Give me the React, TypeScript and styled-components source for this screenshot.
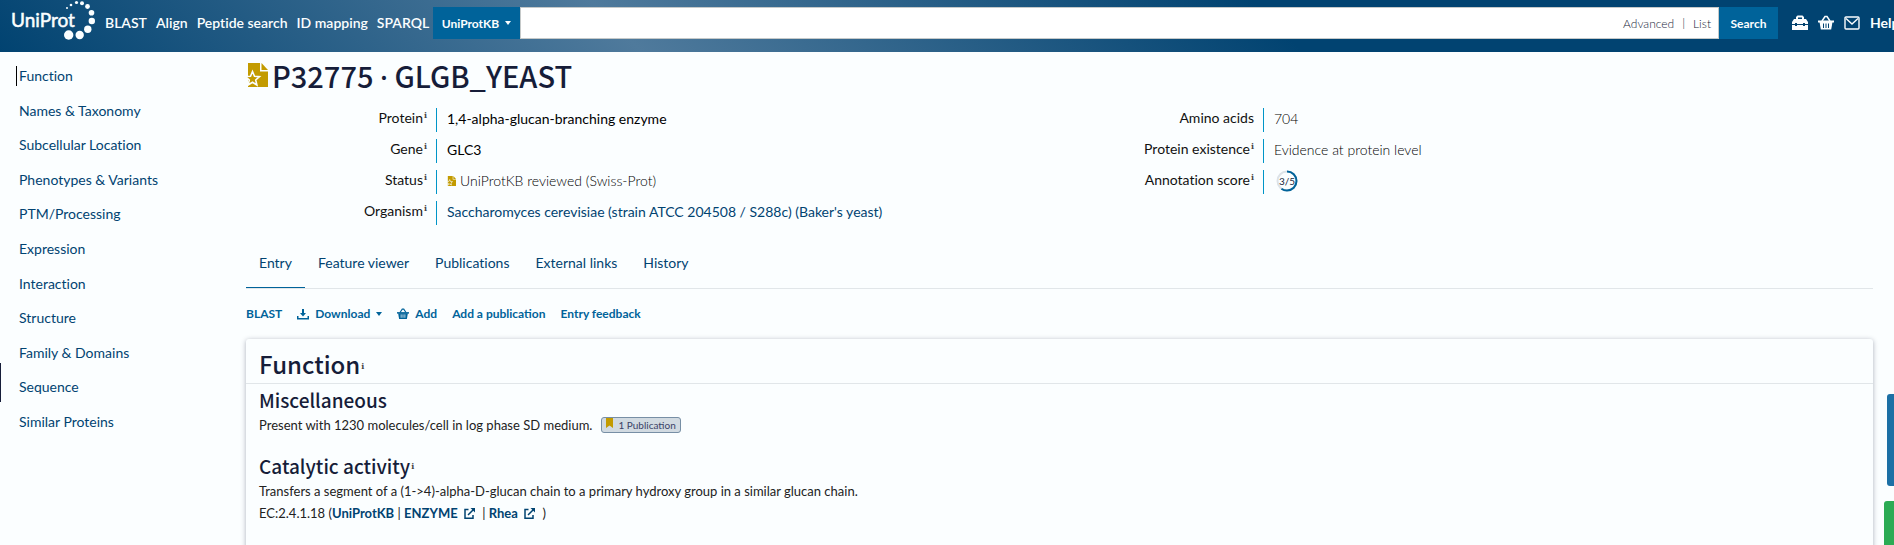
import React from 'react';
import styled, { createGlobalStyle } from 'styled-components';

const LATO = "Lato, 'Liberation Sans', sans-serif";
const HEADING = "'Noto Sans CJK SC', 'Noto Sans', sans-serif";
const SEA = '#014371';
const ACTION = '#00639a';

const GlobalStyle = createGlobalStyle`
  * { box-sizing: border-box; }
  html { background: #fbfeff; }
  body { margin: 0; font: 400 14px/20px ${LATO}; font-variant-ligatures: none; color: #111; overflow: hidden; }
  a { color: ${SEA}; text-decoration: none; }
  button { font-family: ${LATO}; cursor: pointer; border: 0; background: none; padding: 0; }
  h1, h2, h3, p, dl, dd, ul { margin: 0; padding: 0; }
  svg { display: block; flex: none; }
`;

const Page = styled.div`
  position: relative;
  min-height: 100vh;
`;

const Header = styled.header`
  height: 52px;
  display: flex;
  align-items: center;
  padding-bottom: 6px;
  overflow: hidden;
  background: linear-gradient(45deg, #014371 0%, #4f7a9c 33%, #014371 67%, #014371 100%);
`;

const LogoLink = styled.a`
  flex: none;
  margin-left: 11px;
  width: 94px;
  height: 46px;
`;

const TopNav = styled.nav`
  display: flex;
  flex: none;
  gap: 9px;
  width: 328px;
  a { color: #fbfeff; white-space: nowrap; font-weight: 600; }
`;

const SearchForm = styled.form`
  flex: 1;
  min-width: 0;
  display: flex;
  height: 32px;
`;

const SearchButton = styled.button`
  flex: none;
  width: ${(p: { $w: number }) => p.$w}px;
  display: flex;
  align-items: center;
  justify-content: center;
  gap: 6px;
  background: ${ACTION};
  color: #fbfeff;
  font-size: 12px;
  font-weight: 700;
`;

const SearchField = styled.div`
  flex: 1;
  min-width: 0;
  display: flex;
  align-items: center;
  gap: 8px;
  padding-right: 7px;
  background: #fff;
  border: 1px solid #c5c9c9;
  font-size: 12px;
  font-weight: 300;
  color: #161d39;
  input { flex: 1; min-width: 0; border: 0; outline: 0; height: 28px; background: none; }
  button { color: inherit; font-size: 12px; font-weight: 300; }
`;

const Tools = styled.div`
  flex: none;
  width: 116px;
  display: flex;
  align-items: center;
  gap: 10px;
  padding-left: 14px;
  color: #fbfeff;
  a { color: #fbfeff; font-weight: 700; }
`;

const Columns = styled.div`
  display: flex;
`;

const Sidebar = styled.ul`
  flex: none;
  width: 246px;
  height: 366px;
  margin-top: 14px;
  padding-left: 16px;
  list-style: none;
  display: flex;
  flex-direction: column;
  justify-content: space-between;
`;

const SideItem = styled.li<{ $active?: boolean }>`
  border-left: 1px solid ${(p) => (p.$active ? '#000' : 'transparent')};
  padding-left: 2px;
`;

const Main = styled.main`
  flex: 1;
  min-width: 0;
  padding: 0 21px 0 0;
`;

const Title = styled.h1`
  display: flex;
  align-items: center;
  gap: 4px;
  padding-top: 4px;
  font: 500 29px/38px ${HEADING};
  color: #161d39;
`;

const TitleText = styled.span`
  white-space: pre;
`;

const Dot = styled.span`
  font-family: 'Noto Sans', sans-serif;
  line-height: 20px;
`;

const Meta = styled.div`
  display: grid;
  grid-template-columns: 1fr 1fr;
  column-gap: 27px;
  margin-top: 14px;
`;

const MetaList = styled.dl`
  display: flex;
  flex-direction: column;
  gap: 7px;
`;

const MetaRow = styled.div`
  display: flex;
  height: 24px;
  dt { width: 190px; padding-right: 9px; text-align: right; line-height: 20px; }
  dd { display: flex; align-items: center; gap: 4px; border-left: 1px solid #0095c8; padding: 0 0 2px 10px; font-weight: 300; color: #000; }
  dd a { font-weight: 400; }
`;

const Strong = styled.span`
  font-weight: 400;
`;

const Info = styled.sup`
  font: 700 8px/8px 'DejaVu Serif', serif;
  vertical-align: 5px;
  margin-left: 1px;
  color: #444;
`;

const Tabs = styled.nav`
  display: flex;
  margin-top: 14px;
  border-bottom: 1px solid #e1e6e9;
`;

const Tab = styled.a<{ $active?: boolean }>`
  padding: 14px 13px;
  border-bottom: 1px solid ${(p) => (p.$active ? ACTION : 'transparent')};
`;

const Toolbar = styled.div`
  display: flex;
  align-items: center;
  gap: 15px;
  margin-top: 15px;
  height: 20px;
`;

const ToolButton = styled.button`
  display: flex;
  align-items: center;
  gap: 6px;
  color: ${ACTION};
  font-size: 12px;
  line-height: 20px;
  font-weight: 700;
`;

const Card = styled.section`
  margin-top: 15px;
  min-height: 240px;
  border-radius: 3px;
  background: #fbfeff;
  box-shadow: 0 1px 5px rgba(22, 29, 57, 0.35);
`;

const CardHead = styled.h2`
  padding: 9px 13px 3px;
  border-bottom: 1px solid #e1e6e9;
  font: 500 24px/32px ${HEADING};
  color: #161d39;
`;

const CardBody = styled.div`
  padding: 2px 13px;
`;

const SubHead = styled.h3`
  font: 500 19px/28px ${HEADING};
  color: #161d39;
`;

const Line = styled.p`
  display: flex;
  align-items: center;
  font-size: 13px;
  line-height: 22px;
  white-space: pre;
  color: #222;
  a { font-weight: 700; }
`;

const Block = styled.div`
  margin-bottom: 16px;
`;

const PubBadge = styled.button`
  display: flex;
  align-items: center;
  gap: 5px;
  height: 16px;
  margin-left: 9px;
  padding: 0 4px;
  border: 1px solid #778fa5;
  border-radius: 3px;
  background: #d1dae1;
  color: #3a4267;
  font-size: 10px;
  line-height: 14px;
`;

const ScrollMark = styled.div`
  position: absolute;
  left: 0;
  top: 363px;
  width: 1px;
  height: 39px;
  background: #161d39;
`;

const SideTab = styled.button<{ $top: number; $w: number; $color: string }>`
  position: absolute;
  right: 0;
  top: ${(p) => p.$top}px;
  width: ${(p) => p.$w}px;
  height: 92px;
  border-radius: 3px 0 0 3px;
  background: ${(p) => p.$color};
`;

const Clip = styled.div`
  position: absolute;
  inset: 0;
  overflow: hidden;
  pointer-events: none;
`;

const Logo = () => (
  <svg width="93" height="46" viewBox="0 0 93 46" fill="#fbfeff">
    <text x="0" y="27" stroke="#fbfeff" strokeWidth="0.5" fontFamily="Lato, sans-serif" fontWeight="400" fontSize="19">UniProt</text>
    <circle cx="56" cy="8" r="1" />
    <circle cx="60" cy="5" r="1.3" />
    <circle cx="65.500" cy="2.500" r="1.600" />
    <circle cx="71" cy="3.200" r="2" />
    <circle cx="76.500" cy="6.500" r="2.400" />
    <circle cx="80.500" cy="12.800" r="2.800" />
    <circle cx="80.800" cy="21" r="3.200" />
    <circle cx="76.800" cy="29.300" r="3.700" />
    <circle cx="68.700" cy="35" r="4.200" />
    <circle cx="57.700" cy="35" r="4.700" />
  </svg>
);

const Caret = () => (
  <svg width="6" height="4" viewBox="0 0 6 4"><path d="M0 0h6L3 4z" fill="currentColor" /></svg>
);

const Reviewed = ({ w, h }: { w: number; h: number }) => (
  <svg width={w} height={h} viewBox="0 0 22 24">
    <path d="M2 0h12v8.500h8V24H2z" fill="#c39b00" />
    <path d="M15.500 0l6.500 7h-6.500z" fill="#c39b00" />
    <path d="M6.500 8.500l2 4.700 5 .4-3.800 3.400 1.200 5-4.400-2.700-4.400 2.700 1.200-5L-.5 13.600l5-.4z" fill="#c39b00" stroke="#fbfeff" strokeWidth="1.600" />
  </svg>
);

const Basket = ({ size }: { size: number }) => (
  <svg width={size} height={size} viewBox="0 0 16 16" fill="none" stroke="currentColor">
    <path d="M4 6l3-4.500h2L12 6" strokeWidth="1.500" />
    <path d="M0 5.500h16v2H0z" fill="currentColor" stroke="none" />
    <path d="M1.500 7h13l-1.300 7.500H2.800z" fill="currentColor" stroke="none" />
    <path d="M5.500 8.500v4.500M8 8.500v4.500M10.500 8.500v4.500" stroke={size > 13 ? SEA : '#fbfeff'} />
  </svg>
);

const Toolbox = () => (
  <svg width="16" height="16" viewBox="0 0 16 16" fill="currentColor">
    <path fillRule="evenodd" d="M4 4V2L5.500 .5h5L12 2v2h2l2 3v2h-3V8h-2v1H5V8H3v1H0V7l2-3zm2 0h4V2.500H6z" />
    <path d="M0 10h3v1h2v-1h6v1h2v-1h3v5H0z" />
  </svg>
);

const Mail = () => (
  <svg width="16" height="16" viewBox="0 0 16 16" fill="none" stroke="currentColor" strokeWidth="1.400">
    <rect x="1" y="2" width="14" height="12" rx="1" /><path d="M2 3.500L8 9l6-5.500" />
  </svg>
);

const DownloadIcon = () => (
  <svg width="12" height="12" viewBox="0 0 12 12" fill="currentColor">
    <path d="M5 1h2v4h2L6 8.500 3 5h2z" /><path d="M0 8h1.500v2h9V8H12v3.500H0z" />
  </svg>
);

const External = () => (
  <svg width="11" height="11" viewBox="0 0 11 11" fill="none" stroke={SEA} strokeWidth="1.500">
    <path d="M4.500 1.500H1v8.700h8V7M4 7l5.500-5.500" /><path d="M6.500 0H11v4.500z" fill={SEA} stroke="none" />
  </svg>
);

const Score = () => (
  <svg width="26" height="22" viewBox="-2 0 26 22" fill="none" strokeWidth="2">
    <circle cx="11" cy="11" r="9.500" stroke="#dde3e8" />
    <circle cx="11" cy="11" r="9.500" stroke={ACTION} pathLength="5" strokeDasharray="3 2" transform="rotate(-90 11 11)" />
    <text x="11" y="15" textAnchor="middle" fill="#161d39" fontFamily="Lato, sans-serif" fontWeight="400" fontSize="10">3/5</text>
  </svg>
);

const Bookmark = () => (
  <svg width="7" height="14" viewBox="0 0 7 14"><path d="M0 0h7v10L3.500 7.500 0 10z" fill="#c39b00" /></svg>
);

const ExtLink = styled.a`
  display: flex;
  align-items: center;
  gap: 3px;
  margin-right: 4px;
`;

const sections = [
  'Function', 'Names & Taxonomy', 'Subcellular Location', 'Phenotypes & Variants', 'PTM/Processing',
  'Expression', 'Interaction', 'Structure', 'Family & Domains', 'Sequence', 'Similar Proteins',
];

export default function App() {
  return (
    <Page>
      <GlobalStyle />
      <Header>
        <LogoLink href="#" aria-label="UniProt home"><Logo /></LogoLink>
        <TopNav>
          {['BLAST', 'Align', 'Peptide search', 'ID mapping', 'SPARQL'].map((t) => <a key={t} href="#">{t}</a>)}
        </TopNav>
        <SearchForm>
          <SearchButton type="button" $w={87}>UniProtKB <Caret /></SearchButton>
          <SearchField>
            <input type="text" aria-label="Search UniProtKB" />
            <button type="button">Advanced</button>
            <span>|</span>
            <button type="button">List</button>
          </SearchField>
          <SearchButton type="submit" $w={59}>Search</SearchButton>
        </SearchForm>
        <Tools>
          <Toolbox /><Basket size={16} /><Mail /><a href="#">Help</a>
        </Tools>
      </Header>
      <Columns>
        <Sidebar>
          {sections.map((s, i) => <SideItem key={s} $active={i === 0}><a href="#">{s}</a></SideItem>)}
        </Sidebar>
        <Main>
          <Title><Reviewed w={22} h={24} /><TitleText>P32775 <Dot>·</Dot> GLGB_YEAST</TitleText></Title>
          <Meta>
            <MetaList>
              <MetaRow><dt>Protein<Info>i</Info></dt><dd><Strong>1,4-alpha-glucan-branching enzyme</Strong></dd></MetaRow>
              <MetaRow><dt>Gene<Info>i</Info></dt><dd><Strong>GLC3</Strong></dd></MetaRow>
              <MetaRow><dt>Status<Info>i</Info></dt><dd><Reviewed w={9} h={10} />UniProtKB reviewed (Swiss-Prot)</dd></MetaRow>
              <MetaRow><dt>Organism<Info>i</Info></dt><dd><a href="#">Saccharomyces cerevisiae (strain ATCC 204508 / S288c) (Baker's yeast)</a></dd></MetaRow>
            </MetaList>
            <MetaList>
              <MetaRow><dt>Amino acids</dt><dd>704</dd></MetaRow>
              <MetaRow><dt>Protein existence<Info>i</Info></dt><dd>Evidence at protein level</dd></MetaRow>
              <MetaRow><dt>Annotation score<Info>i</Info></dt><dd><Score /></dd></MetaRow>
            </MetaList>
          </Meta>
          <Tabs>
            {['Entry', 'Feature viewer', 'Publications', 'External links', 'History'].map((t, i) => (
              <Tab key={t} href="#" $active={i === 0}>{t}</Tab>
            ))}
          </Tabs>
          <Toolbar>
            <ToolButton>BLAST</ToolButton>
            <ToolButton><DownloadIcon />Download <Caret /></ToolButton>
            <ToolButton><Basket size={12} />Add</ToolButton>
            <ToolButton>Add a publication</ToolButton>
            <ToolButton>Entry feedback</ToolButton>
          </Toolbar>
          <Card>
            <CardHead>Function<Info>i</Info></CardHead>
            <CardBody>
              <Block>
                <SubHead>Miscellaneous</SubHead>
                <Line>Present with 1230 molecules/cell in log phase SD medium.<PubBadge><Bookmark />1 Publication</PubBadge></Line>
              </Block>
              <Block>
                <SubHead>Catalytic activity<Info>i</Info></SubHead>
                <Line>Transfers a segment of a (1-&gt;4)-alpha-D-glucan chain to a primary hydroxy group in a similar glucan chain.</Line>
                <Line>EC:2.4.1.18 (<a href="#">UniProtKB</a> | <ExtLink href="#">ENZYME <External /></ExtLink> | <ExtLink href="#">Rhea <External /></ExtLink> )</Line>
              </Block>
            </CardBody>
          </Card>
        </Main>
      </Columns>
      <ScrollMark />
      <Clip>
        <SideTab aria-label="Help" $top={394} $w={7} $color="#1c70a5" />
        <SideTab aria-label="Feedback" $top={501} $w={10} $color="#2bab54" />
      </Clip>
    </Page>
  );
}
